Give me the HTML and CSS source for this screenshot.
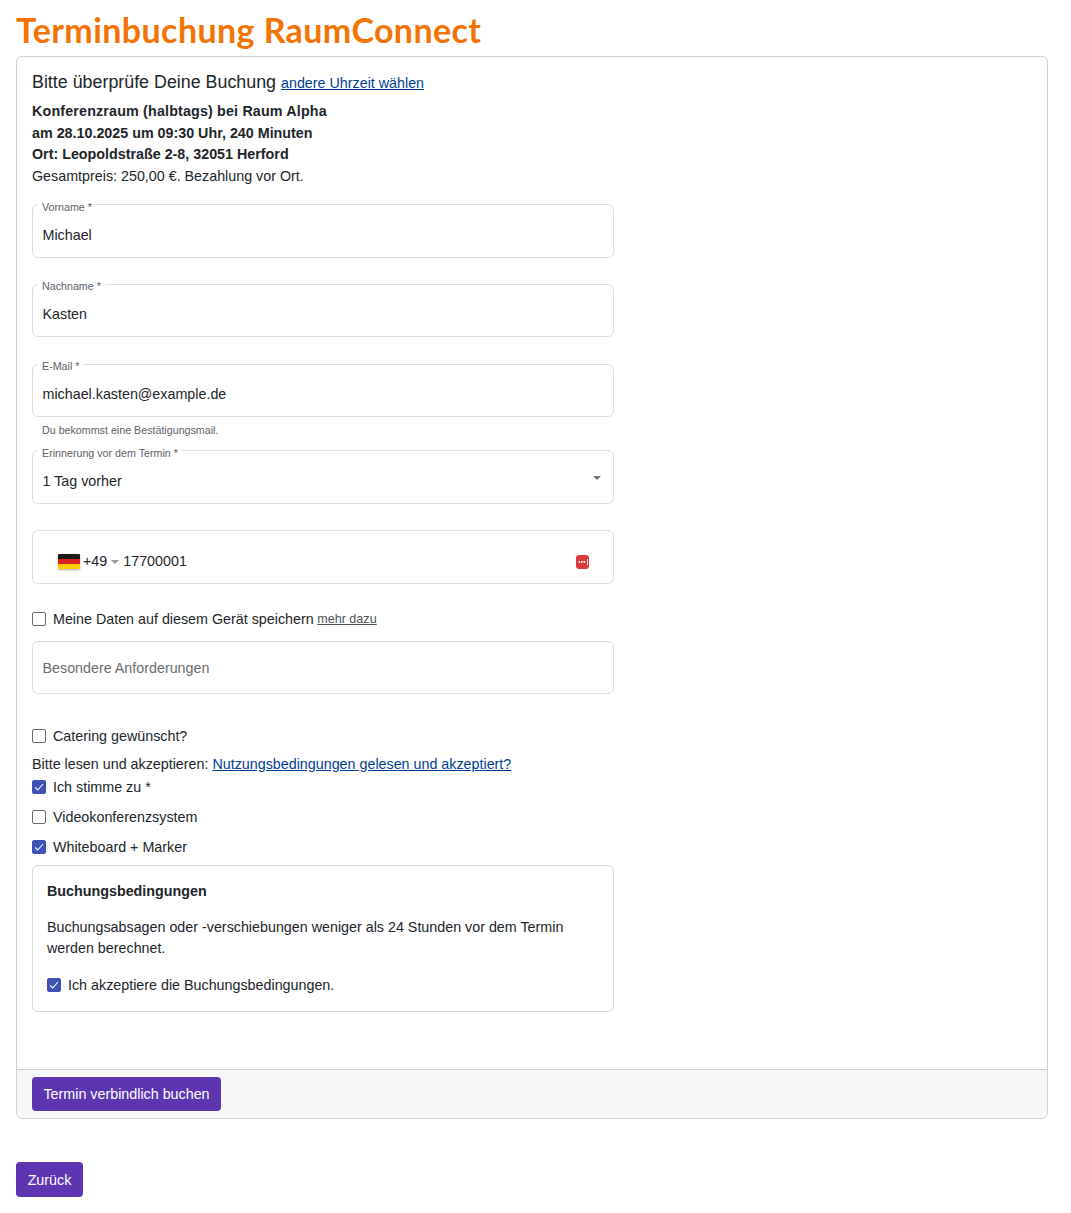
FILE: index.html
```html
<!DOCTYPE html>
<html lang="de">
<head>
    <meta charset="utf-8" />
    <title>Terminbuchung RaumConnect</title>
    <link rel="stylesheet" href="styles.css">
</head>
<body>
    <h1 class="page_title">Terminbuchung RaumConnect</h1>

    <form class="card" onsubmit="return false;">
        <div class="card_body">
            <div class="review_head">Bitte überprüfe Deine Buchung <a href="#" class="review_link">andere Uhrzeit wählen</a></div>
            <div class="summary_line summary_first"><b>Konferenzraum (halbtags) bei Raum Alpha</b></div>
            <div class="summary_line"><b>am 28.10.2025 um 09:30 Uhr, 240 Minuten</b></div>
            <div class="summary_line"><b>Ort: Leopoldstraße 2-8, 32051 Herford</b></div>
            <div class="summary_line">Gesamtpreis: 250,00 €. Bezahlung vor Ort.</div>

            <div class="form_col">
                <div class="field field_first">
                    <span class="field_label">Vorname *</span>
                    <span class="field_value">Michael</span>
                </div>
                <div class="field field_name">
                    <span class="field_label">Nachname *</span>
                    <span class="field_value">Kasten</span>
                </div>
                <div class="field field_mail">
                    <span class="field_label">E-Mail *</span>
                    <span class="field_value">michael.kasten@example.de</span>
                </div>
                <div class="field_hint">Du bekommst eine Bestätigungsmail.</div>
                <div class="field field_select">
                    <span class="field_label">Erinnerung vor dem Termin *</span>
                    <span class="field_value">1 Tag vorher</span>
                    <span class="select_arrow"></span>
                </div>
                <div class="field field_phone">
                    <svg class="flag" width="22" height="15" viewBox="0 0 22 15">
                        <rect width="22" height="5" fill="#1a1a1a" />
                        <rect y="5" width="22" height="5" fill="#dd1f1f" />
                        <rect y="10" width="22" height="5" fill="#ffce00" />
                    </svg>
                    <span class="phone_code">+49</span>
                    <span class="phone_arrow"></span>
                    <span class="field_value">17700001</span>
                    <svg class="phone_badge" width="13" height="14" viewBox="0 0 13 14">
                        <rect width="13" height="14" rx="3" fill="#dc3a3a" />
                        <rect x="2.5" y="6" width="1.6" height="1.8" fill="#fff" />
                        <rect x="5" y="6" width="1.6" height="1.8" fill="#fff" />
                        <rect x="7.5" y="6" width="1.6" height="1.8" fill="#fff" />
                        <rect x="11" y="4" width="0.8" height="6" fill="#fff" />
                    </svg>
                </div>

                <label class="check check_save"><span class="box"></span>Meine Daten auf diesem Gerät speichern <a href="#" class="more_link">mehr dazu</a></label>

                <div class="field field_plain">
                    <span class="field_placeholder">Besondere Anforderungen</span>
                </div>

                <label class="check check_catering"><span class="box"></span>Catering gewünscht?</label>
                <div class="terms_line">Bitte lesen und akzeptieren: <a href="#" class="terms_link">Nutzungsbedingungen gelesen und akzeptiert?</a></div>
                <label class="check check_agree"><span class="box box_on"><svg width="14" height="14" viewBox="0 0 14 14"><path d="M3 7.3 5.7 10 11 4" fill="none" stroke="#fff" stroke-width="1.1" /></svg></span>Ich stimme zu *</label>
                <label class="check check_option"><span class="box"></span>Videokonferenzsystem</label>
                <label class="check check_option"><span class="box box_on"><svg width="14" height="14" viewBox="0 0 14 14"><path d="M3 7.3 5.7 10 11 4" fill="none" stroke="#fff" stroke-width="1.1" /></svg></span>Whiteboard + Marker</label>

                <div class="conditions">
                    <div class="conditions_title">Buchungsbedingungen</div>
                    <p class="conditions_text">Buchungsabsagen oder -verschiebungen weniger als 24 Stunden vor dem Termin werden berechnet.</p>
                    <label class="check"><span class="box box_on"><svg width="14" height="14" viewBox="0 0 14 14"><path d="M3 7.3 5.7 10 11 4" fill="none" stroke="#fff" stroke-width="1.1" /></svg></span>Ich akzeptiere die Buchungsbedingungen.</label>
                </div>
            </div>
        </div>
        <div class="card_footer">
            <button class="btn btn_submit" type="submit">Termin verbindlich buchen</button>
        </div>
    </form>

    <button class="btn btn_back" type="button">Zurück</button>
</body>
</html>
```

FILE: styles.css
```css
* {
    box-sizing: border-box;
}

body {
    margin: 0;
    padding: 0 23px 16px 16px;
    font-family: "Liberation Sans", Arial, sans-serif;
    font-size: 14.3px;
    line-height: 21px;
    color: #212529;
    background: #fff;
}

.page_title {
    margin: 0;
    padding-top: 10px;
    height: 56px;
    font-family: Lato, sans-serif;
    font-size: 34px;
    line-height: 40px;
    font-weight: 700;
    letter-spacing: 0.4px;
    color: #f27405;
}

.card {
    border: 1px solid #d0d0d0;
    border-radius: 6px;
    background: #fff;
}

.card_body {
    height: 1012px;
    padding: 13px 15px 0;
}

.card_footer {
    height: 49px;
    padding: 7px 15px;
    background: #f7f7f7;
    border-top: 1px solid #cfcfcf;
    border-radius: 0 0 6px 6px;
}

.review_head {
    font-size: 17.85px;
    line-height: 24px;
    margin-bottom: 6px;
}

.review_link {
    font-size: 14.3px;
}

a {
    color: #003e94;
}

.summary_line {
    line-height: 21.5px;
}

.summary_first {
    letter-spacing: 0.16px;
}

.form_col {
    width: 582px;
}

.field {
    position: relative;
    display: flex;
    align-items: center;
    height: 53.5px;
    margin-bottom: 26.3px;
    padding: 8px 9.5px 0;
    border: 1px solid #dedede;
    border-radius: 6px;
}

.field_first {
    margin-top: 17px;
    padding-top: 10px;
}

.field_mail {
    margin-bottom: 0;
}

.field_label {
    position: absolute;
    top: -4px;
    left: 5px;
    padding: 0 4px;
    background: #fff;
    font-size: 10.7px;
    line-height: 13px;
    color: #5c6066;
}

.field_name .field_label,
.field_mail .field_label {
    top: -5px;
}

.field_hint {
    height: 33px;
    padding: 6px 10px 0;
    font-size: 10.7px;
    line-height: 15px;
    color: #5c6066;
}

.field_select {
    padding-top: 10px;
}

.select_arrow {
    position: absolute;
    right: 12px;
    top: 25px;
    border-style: solid;
    border-width: 4.5px 4.5px 0;
    border-color: #757575 transparent transparent;
}

.field_phone {
    height: 54px;
    margin-bottom: 25.8px;
    padding: 10px 24px 0 25px;
}

.flag {
    margin-right: 3px;
    border-radius: 1px;
    box-shadow: 0 1px 2px rgba(0, 0, 0, 0.35);
}

.phone_arrow {
    margin: 0 4px;
    border-style: solid;
    border-width: 4px 4px 0;
    border-color: #999 transparent transparent;
}

.phone_badge {
    margin-left: auto;
}

.field_plain {
    height: 53px;
    padding-top: 2px;
    margin-bottom: 32px;
}

.field_placeholder {
    color: #6c6c6c;
}

.check {
    display: flex;
    align-items: center;
    height: 21px;
}

.check_save {
    margin-bottom: 11px;
    margin-top: -1px;
}

.box {
    display: block;
    flex: none;
    width: 14px;
    height: 14px;
    margin-right: 7px;
    border: 1px solid #6c6c6c;
    border-radius: 2px;
    background: #fff;
}

.box svg {
    display: block;
    margin: -1px;
}

.box_on {
    border-color: #3f51b5;
    background: #3f51b5;
}

.more_link {
    margin-left: 3.5px;
    font-size: 12.6px;
    color: #4d5256;
}

.terms_line {
    margin-top: 7px;
    height: 21px;
}

.check_agree {
    margin-top: 2px;
}

.check_option {
    margin-top: 9px;
}

.conditions {
    margin-top: 7px;
    height: 147px;
    padding: 15px 14px;
    border: 1px solid #d9d9d9;
    border-radius: 6px;
}

.conditions_title {
    font-weight: 700;
    margin-bottom: 15px;
}

.conditions_text {
    margin: 0 0 16px;
}

.btn {
    display: block;
    border: 0;
    border-radius: 4px;
    background: #5e35b1;
    color: #fff;
    font-family: inherit;
    font-size: 14.3px;
}

.btn_submit {
    width: 189px;
    height: 34px;
    padding: 0;
}

.btn_back {
    width: 67px;
    height: 35px;
    margin-top: 43px;
    padding: 0;
}
```
